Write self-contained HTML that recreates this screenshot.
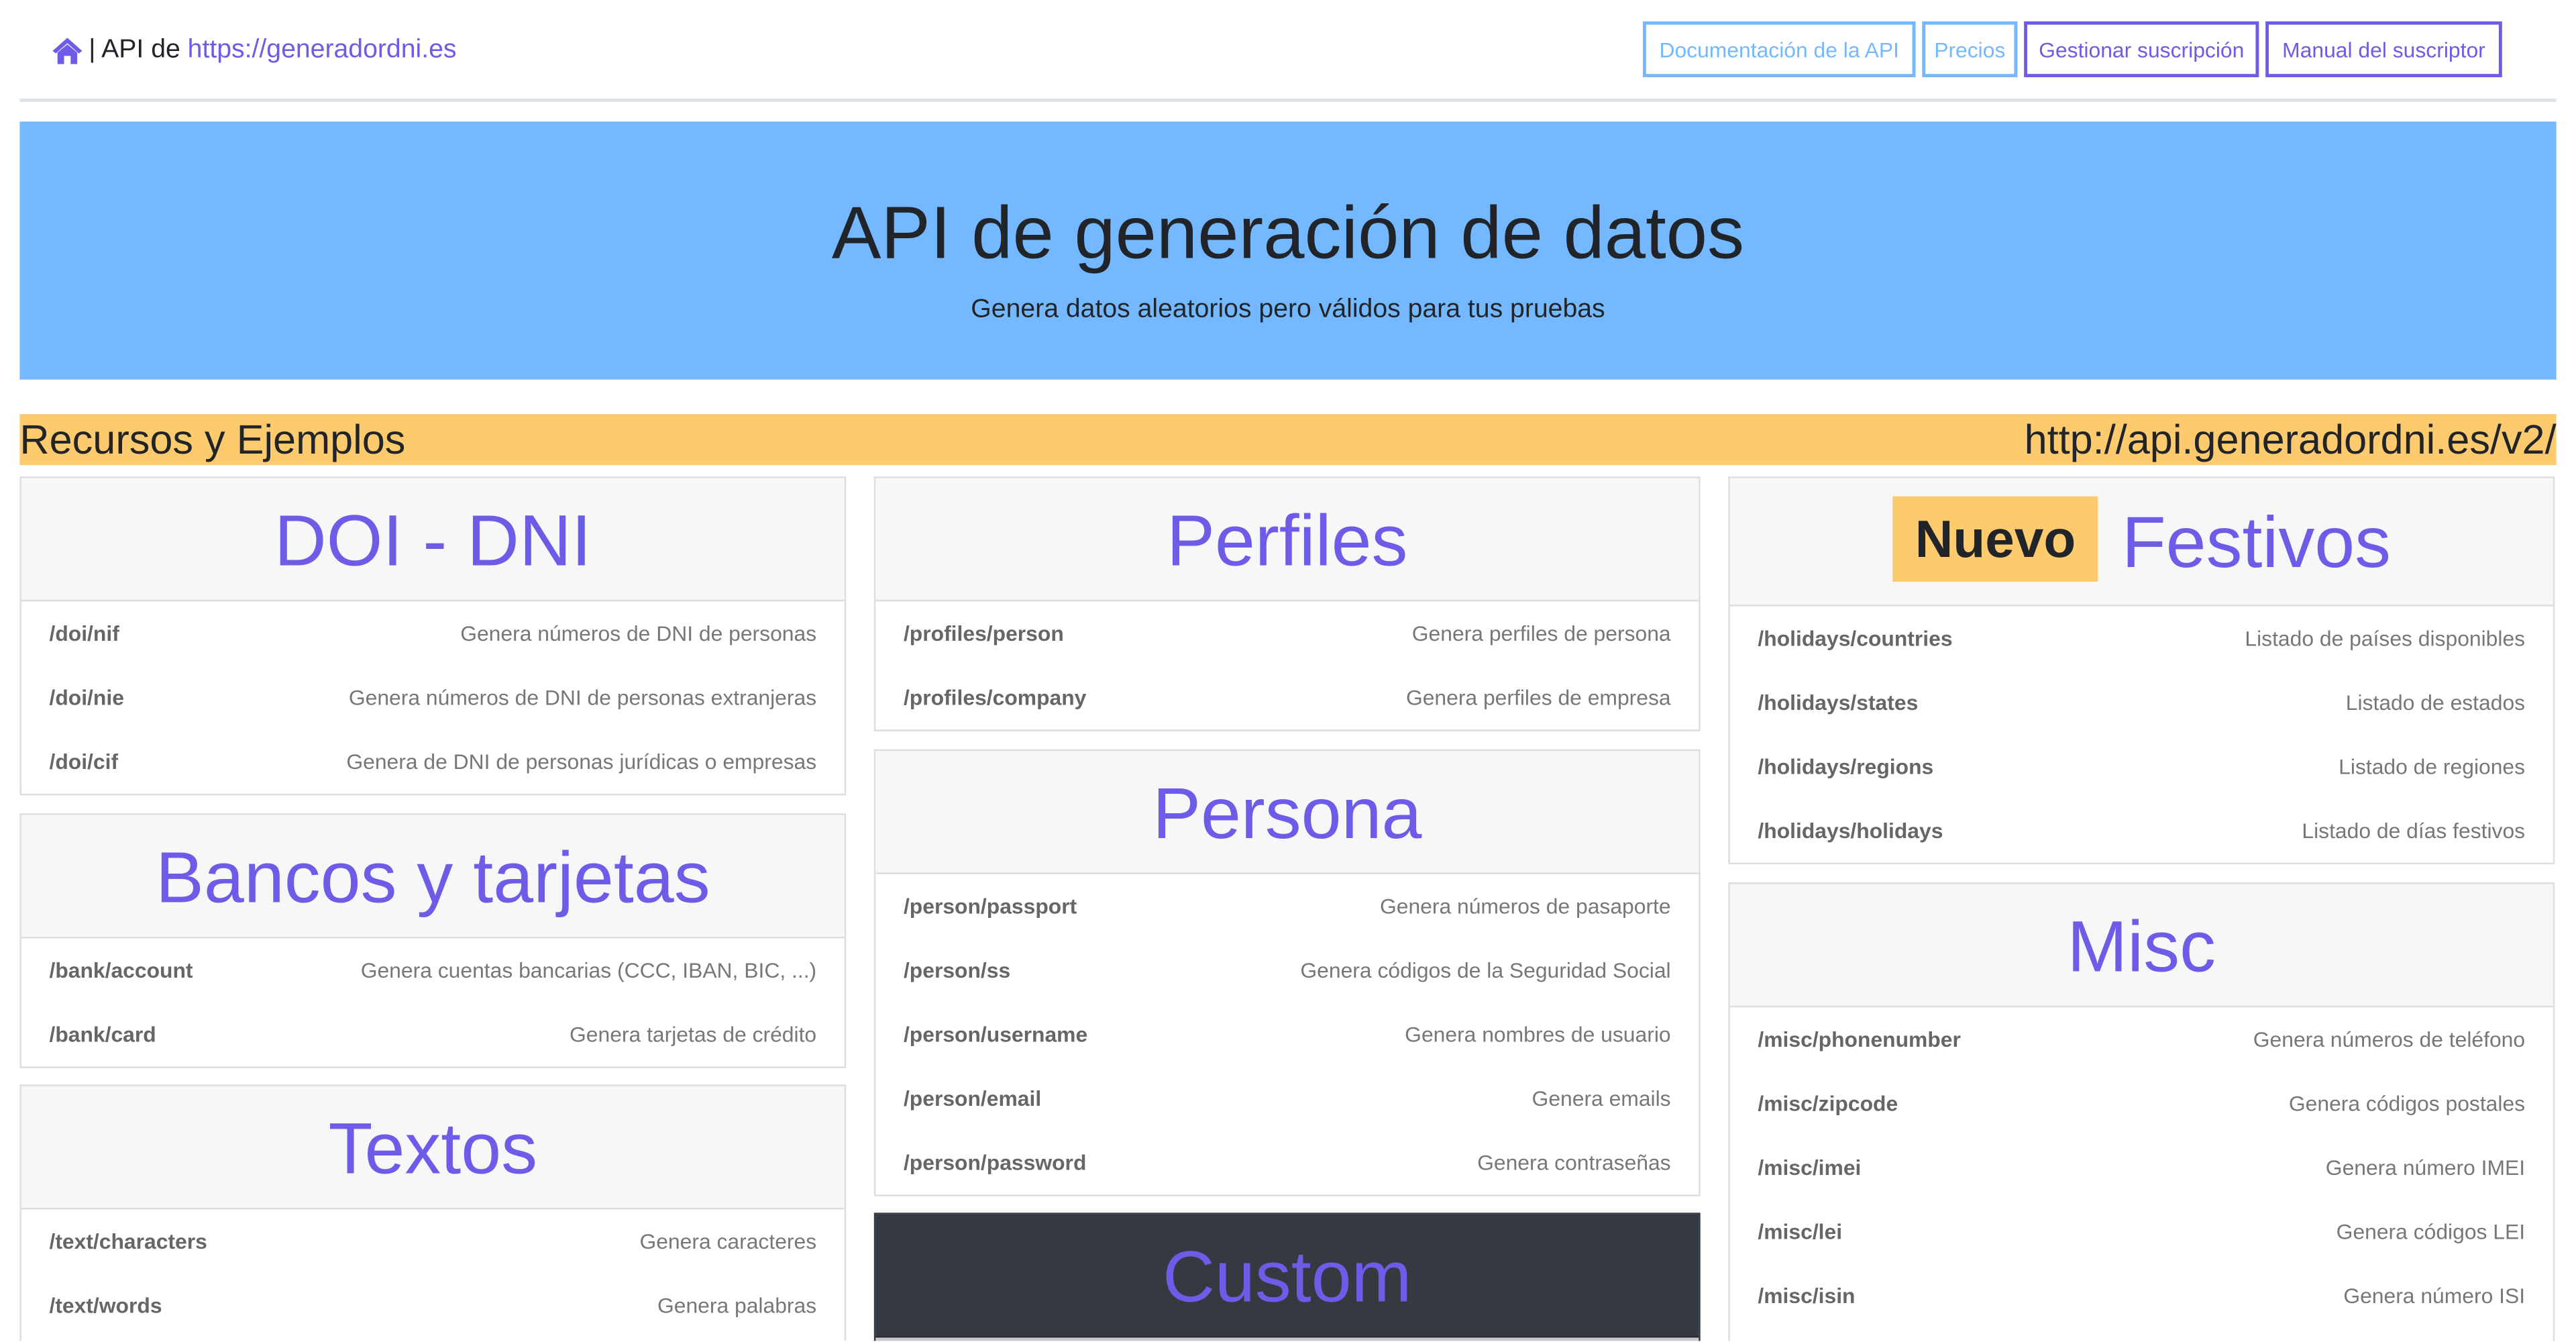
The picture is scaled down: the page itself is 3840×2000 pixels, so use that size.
<!DOCTYPE html>
<html><head><meta charset="utf-8"><style>
html,body{margin:0;padding:0;width:3840px;height:2000px;overflow:hidden;background:#fff}
#w{position:absolute;left:0;top:0;width:1568px;height:816px;overflow:hidden;transform:scale(2.44898);transform-origin:0 0;font-family:"Liberation Sans",sans-serif;color:#212529}
.a{position:absolute}
.btn{position:absolute;top:13px;height:30px;border:2px solid #74b9ff;color:#74b9ff;font-size:13px;line-height:32px;text-align:center;box-sizing:content-box}
.btn.p{border-color:#6c5ce7;color:#6c5ce7}
.card{position:absolute;width:501px;border:1px solid #ddd;background:#fff}
.hd{height:74px;background:#f7f7f7;border-bottom:1px solid #ddd;text-align:center;font-size:44px;line-height:78px;color:#6c5ce7;font-weight:300}
.r{height:39px;line-height:39px;padding:0 17px;font-size:13px;color:#777;display:flex;justify-content:space-between}
.r b{color:#666}
</style></head><body><div id="w">
<svg class="a" style="left:32px;top:23px" width="18" height="16" viewBox="0 0 18 16"><path d="M9 0 L0 8 L2 9.5 L9 3.3 L16 9.5 L18 8 Z M3 9 L9 4 L15 9 V16 H11 V11 H7 V16 H3 Z" fill="#6c5ce7"/></svg>
<div class="a" style="left:54px;top:21px;font-size:16px;line-height:20px">| API de <span style="color:#6c5ce7">https://generadordni.es</span></div>
<div class="btn" style="left:1000px;width:162px">Documentación de la API</div>
<div class="btn" style="left:1170px;width:54px">Precios</div>
<div class="btn p" style="left:1232px;width:139px">Gestionar suscripción</div>
<div class="btn p" style="left:1379px;width:140px">Manual del suscriptor</div>
<div class="a" style="left:12px;top:60px;width:1544px;height:2px;background:#dee2e6"></div>
<div class="a" style="left:12px;top:74px;width:1544px;height:157px;background:#74b9ff;text-align:center">
<div style="font-size:45px;margin-top:40px;line-height:56px;color:#212529;font-weight:300">API de generación de datos</div>
<div style="font-size:16px;margin-top:10px">Genera datos aleatorios pero válidos para tus pruebas</div></div>
<div class="a" style="left:12px;top:252px;width:1544px;height:31px;background:#fdcb6e;font-size:25px;line-height:33px;display:flex;justify-content:space-between"><span>Recursos y Ejemplos</span><span>http://api.generadordni.es/v2/</span></div>

<div class="card" style="left:12px;top:290px"><div class="hd">DOI - DNI</div>
<div class="r"><b>/doi/nif</b><span>Genera números de DNI de personas</span></div>
<div class="r"><b>/doi/nie</b><span>Genera números de DNI de personas extranjeras</span></div>
<div class="r"><b>/doi/cif</b><span>Genera de DNI de personas jurídicas o empresas</span></div></div>
<div class="card" style="left:12px;top:495px"><div class="hd">Bancos y tarjetas</div>
<div class="r"><b>/bank/account</b><span>Genera cuentas bancarias (CCC, IBAN, BIC, ...)</span></div>
<div class="r"><b>/bank/card</b><span>Genera tarjetas de crédito</span></div></div>
<div class="card" style="left:12px;top:660px"><div class="hd">Textos</div>
<div class="r"><b>/text/characters</b><span>Genera caracteres</span></div>
<div class="r"><b>/text/words</b><span>Genera palabras</span></div>
<div class="r"><b>/text/sentences</b><span>Genera frases</span></div></div>

<div class="card" style="left:532px;top:290px"><div class="hd">Perfiles</div>
<div class="r"><b>/profiles/person</b><span>Genera perfiles de persona</span></div>
<div class="r"><b>/profiles/company</b><span>Genera perfiles de empresa</span></div></div>
<div class="card" style="left:532px;top:456px"><div class="hd">Persona</div>
<div class="r"><b>/person/passport</b><span>Genera números de pasaporte</span></div>
<div class="r"><b>/person/ss</b><span>Genera códigos de la Seguridad Social</span></div>
<div class="r"><b>/person/username</b><span>Genera nombres de usuario</span></div>
<div class="r"><b>/person/email</b><span>Genera emails</span></div>
<div class="r"><b>/person/password</b><span>Genera contraseñas</span></div></div>
<div class="card" style="left:532px;top:738px;border-color:#343a40;background:#c8c9cb;height:120px"><div class="hd" style="background:#343a40;border-color:#2a2e33">Custom</div></div>

<div class="card" style="left:1052px;top:290px"><div class="hd" style="height:77px;line-height:80px"><span style="display:inline-block;background:#fdcb6e;color:#212529;font-weight:bold;font-size:32px;line-height:52px;padding:0 14px;vertical-align:6px;margin-right:14px">Nuevo</span>Festivos</div>
<div class="r"><b>/holidays/countries</b><span>Listado de países disponibles</span></div>
<div class="r"><b>/holidays/states</b><span>Listado de estados</span></div>
<div class="r"><b>/holidays/regions</b><span>Listado de regiones</span></div>
<div class="r"><b>/holidays/holidays</b><span>Listado de días festivos</span></div></div>
<div class="card" style="left:1052px;top:537px"><div class="hd">Misc</div>
<div class="r"><b>/misc/phonenumber</b><span>Genera números de teléfono</span></div>
<div class="r"><b>/misc/zipcode</b><span>Genera códigos postales</span></div>
<div class="r"><b>/misc/imei</b><span>Genera número IMEI</span></div>
<div class="r"><b>/misc/lei</b><span>Genera códigos LEI</span></div>
<div class="r"><b>/misc/isin</b><span>Genera número ISI</span></div>
<div class="r"><b>/misc/uuid</b><span>Genera UUID</span></div></div>
</div></body></html>
